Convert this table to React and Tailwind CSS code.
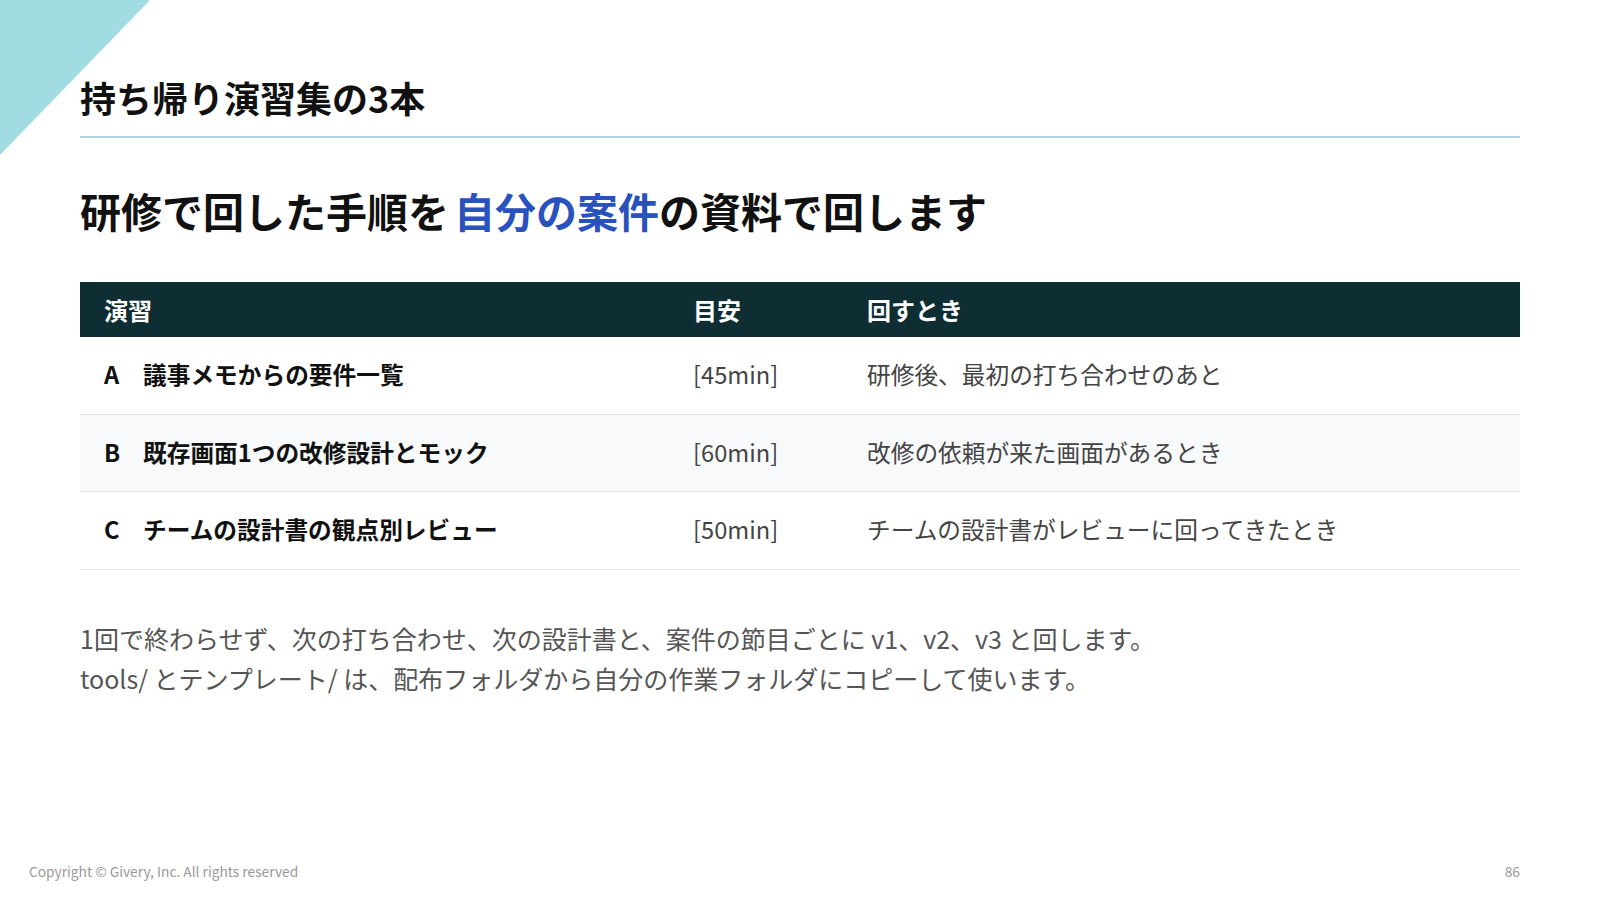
const rows = [
  { key: 'A', title: '議事メモからの要件一覧', time: '[45min]', when: '研修後、最初の打ち合わせのあと', shade: false },
  { key: 'B', title: '既存画面1つの改修設計とモック', time: '[60min]', when: '改修の依頼が来た画面があるとき', shade: true },
  { key: 'C', title: 'チームの設計書の観点別レビュー', time: '[50min]', when: 'チームの設計書がレビューに回ってきたとき', shade: false },
]

const App = () => {
  return (
    <div className="relative w-[1600px] h-[900px] overflow-hidden bg-white font-['Noto_Sans_CJK_JP',sans-serif] text-[#111]">
      {/* corner accent */}
      <svg className="absolute left-0 top-0" width="152" height="156" viewBox="0 0 152 156">
        <polygon points="0,0 150,0 0,155" fill="#a0dce2" />
      </svg>

      <div className="flex flex-col h-full">
        <div className="px-[80px] pt-[73px]">
          <h1 className="text-[36px] leading-[48px] font-bold">持ち帰り演習集の3本</h1>
          <div className="mt-[15px] h-[2px] bg-[#a8dbe2]" />

          <h2 className="mt-[48px] text-[41px] leading-[48px] font-bold">
            研修で回した手順を<span className="ml-[5px] text-[#2a52be]">自分の案件</span>の資料で回します
          </h2>

          <div className="mt-[48px]">
            <div className="flex h-[55px] items-center bg-[#0e2e33] text-white text-[24px] font-bold">
              <div className="w-[589px] pl-[24px]">演習</div>
              <div className="w-[174px] pl-[24px]">目安</div>
              <div className="flex-1 pl-[24px]">回すとき</div>
            </div>
            {rows.map((row) => (
              <div
                key={row.key}
                className={`flex h-[77.5px] items-center border-b border-[#e3e5e8] text-[23.7px] ${row.shade ? 'bg-[#f7f9fa]' : 'bg-white'}`}
              >
                <div className="w-[589px] pl-[24px] flex font-bold text-[#111]">
                  <span className="w-[39px]">{row.key}</span>
                  <span>{row.title}</span>
                </div>
                <div className="w-[174px] pl-[24px] text-[#444]">{row.time}</div>
                <div className="flex-1 pl-[24px] text-[#444]">{row.when}</div>
              </div>
            ))}
          </div>

          <div className="mt-[48px] text-[25px] leading-[40px] text-[#555]">
            <p>1回で終わらせず、次の打ち合わせ、次の設計書と、案件の節目ごとに v1、v2、v3 と回します。</p>
            <p>tools/ とテンプレート/ は、配布フォルダから自分の作業フォルダにコピーして使います。</p>
          </div>
        </div>

        <div className="mt-auto flex items-center justify-between pl-[29px] pr-[80px] pb-[18px] text-[13.75px] text-[#999]">
          <span>Copyright © Givery, Inc. All rights reserved</span>
          <span>86</span>
        </div>
      </div>
    </div>
  )
}

export default App
